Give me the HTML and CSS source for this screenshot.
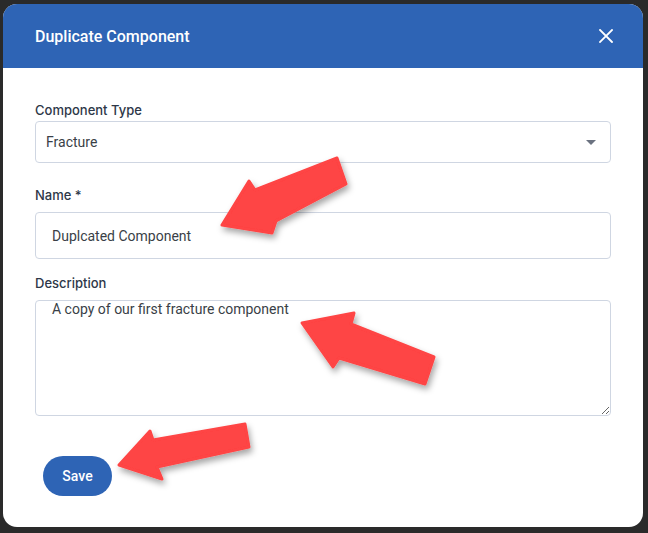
FILE: index.html
```html
<!DOCTYPE html>
<html lang="en">
<head>
<meta charset="utf-8">
<title>Duplicate Component</title>
<link rel="stylesheet" href="styles.css">
</head>
<body>
<div class="backdrop">
  <div class="dialog">
    <div class="dialog-header">
      <h1 class="dialog-title">Duplicate Component</h1>
      <button class="close-btn" aria-label="Close">
        <svg width="14" height="14" viewBox="0 0 14 14"><path d="M1 1L13 13M13 1L1 13" stroke="#fff" stroke-width="1.8" stroke-linecap="square"/></svg>
      </button>
    </div>
    <div class="dialog-body">
      <div class="field field-type">
        <label class="field-label">Component Type</label>
        <div class="select">
          <span class="select-value">Fracture</span>
          <svg class="caret" width="10" height="5" viewBox="0 0 10 5"><path d="M0 0H10L5 5Z" fill="#6b7280"/></svg>
        </div>
      </div>
      <div class="field field-name">
        <label class="field-label">Name *</label>
        <div class="input">Duplcated Component</div>
      </div>
      <div class="field field-desc">
        <label class="field-label">Description</label>
        <textarea class="textarea">A copy of our first fracture component</textarea>
      </div>
      <div class="actions">
        <button class="save-btn">Save</button>
      </div>
    </div>
  </div>
  <svg class="arrows" width="648" height="533" viewBox="0 0 648 533">
    <defs>
      <filter id="sh" x="-20%" y="-20%" width="140%" height="140%">
        <feDropShadow dx="2" dy="4" stdDeviation="3" flood-color="#000" flood-opacity="0.35"/>
      </filter>
    </defs>
    <g fill="#fe4444" stroke="#fe4444" stroke-width="3" stroke-linejoin="round" filter="url(#sh)">
      <polygon points="222,225 249,181 255,190 337,158 346,184 276,221 272,233"/>
      <polygon points="302,323 354,313 351,324 434,357 425,384 339,358 333,367"/>
      <polygon points="119,465 150,431 153,440 245,424 249,447 157,467 162,479"/>
    </g>
  </svg>
</div>
</body>
</html>
```

FILE: styles.css
```css
* { box-sizing: border-box; }
html, body {
  margin: 0;
  padding: 0;
  background: #2a2a2a;
  width: 648px;
  height: 533px;
  overflow: hidden;
  font-family: Roboto, "Liberation Sans", sans-serif;
}
.backdrop {
  position: relative;
  width: 648px;
  height: 533px;
  padding: 4px 5px 6px 3px;
}
.dialog {
  background: #fff;
  border-radius: 14px;
  height: 523px;
  display: flex;
  flex-direction: column;
  overflow: hidden;
}
.dialog-header {
  height: 64px;
  flex: none;
  background: #2e64b5;
  display: flex;
  align-items: center;
  justify-content: space-between;
  padding: 0 30px 0 32px;
}
.dialog-title {
  margin: 0;
  color: #fff;
  font-size: 16px;
  font-weight: 500;
  letter-spacing: 0;
}
.close-btn {
  background: none;
  border: 0;
  padding: 0;
  width: 14px;
  height: 14px;
  display: flex;
}
.dialog-body {
  padding: 34px 32px 0 32px;
  display: flex;
  flex-direction: column;
}
.field {
  display: flex;
  flex-direction: column;
}
.field-label {
  font-family: Inter, Roboto, sans-serif;
  font-size: 13px;
  font-weight: 500;
  color: #2d3748;
  line-height: 16px;
  margin-bottom: 9px;
}
.field-type .field-label { margin-bottom: 3px; }
.field-name { margin-top: 24px; }
.field-desc { margin-top: 16px; }
.select {
  height: 42px;
  border: 1px solid #cfd6e2;
  border-radius: 4px;
  display: flex;
  align-items: center;
  justify-content: space-between;
  padding: 0 14px 0 10px;
}
.select-value {
  font-size: 14px;
  color: #3a3f47;
}
.input {
  height: 47px;
  border: 1px solid #cfd6e2;
  border-radius: 4px;
  display: flex;
  align-items: center;
  padding: 0 16px;
  font-size: 14px;
  color: #3a3f47;
}
.textarea {
  height: 116px;
  border: 1px solid #cfd6e2;
  border-radius: 4px;
  padding: 0 16px;
  font-family: Roboto, "Liberation Sans", sans-serif;
  font-size: 14px;
  line-height: 16px;
  color: #3a3f47;
  resize: vertical;
  outline: none;
}
.actions {
  margin-top: 40px;
  padding-left: 8px;
}
.save-btn {
  width: 69px;
  height: 40px;
  border: 0;
  border-radius: 20px;
  background: #2e64b5;
  color: #fff;
  font-family: Roboto, "Liberation Sans", sans-serif;
  font-size: 14px;
  font-weight: 500;
}
.arrows {
  position: absolute;
  left: 0;
  top: 0;
  pointer-events: none;
}
```
